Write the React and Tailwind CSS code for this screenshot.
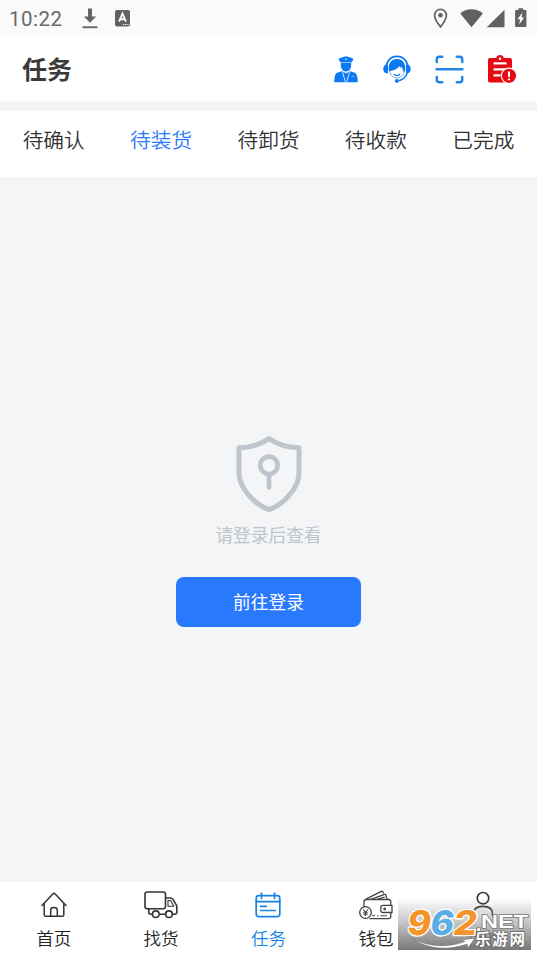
import React from "react";
import { clsx } from "clsx";

const TABS = ["待确认", "待装货", "待卸货", "待收款", "已完成"];

const DownloadIcon = () => (
  <svg width="16" height="21" viewBox="0 0 16 21" fill="#666">
    <path d="M6 0.5h4v8h4.2L8 14.8 1.8 8.500H6z" />
    <path d="M0.500 18.300h15v1.900h-15z" />
  </svg>
);

const KeyboardIcon = () => (
  <svg width="15" height="17" viewBox="0 0 15 17">
    <rect width="15" height="16.500" rx="2" fill="#626262" />
    <path d="M4 11.600 7.500 3.600l3.500 8M5.300 9.200h4.400" fill="none" stroke="#fafafa" strokeWidth="1.900" />
    <path d="M8 14.500h1.300M10.200 14.500h1.300M12.400 14.500h1.300" stroke="#fafafa" strokeWidth="1.200" />
  </svg>
);

const StatusIcons = () => (
  <svg width="96" height="22" viewBox="0 0 96 22" fill="#616161">
    <path
      d="M7.500 2.400c-3.300 0-5.900 2.600-5.900 5.900 0 4.300 5.900 11.600 5.900 11.600s5.900-7.300 5.900-11.600c0-3.300-2.600-5.900-5.900-5.900z"
      fill="none"
      stroke="#666"
      strokeWidth="1.700"
    />
    <circle cx="7.500" cy="8.300" r="2.300" />
    <path d="M27.200 6.500C33.500.9 43.500.9 49.900 6.500L38.500 20.200z" />
    <path d="M71.500 2.700v17.600H53.700z" />
    <path d="M85.400 1.200h4.800v1.700h2.200c.6 0 1 .5 1 1v15.200c0 .6-.4 1-1 1h-9.300c-.6 0-1-.4-1-1V3.900c0-.5.4-1 1-1h2.300z" />
    <path d="M89.400 5.400 84.500 12.200h2.600l-.9 5.400 5-7.100h-2.700z" fill="#fff" />
  </svg>
);

const DriverIcon = () => (
  <svg width="24" height="27" viewBox="0 0 24 27" fill="#0a79f2">
    <path d="M12 0.300c2.300.8 4.800 1.100 6.800 2.300.7.500.5 1.300-.2 2.200L17.300 6.500H6.700L5.400 4.800c-.7-.9-.9-1.700-.2-2.200C7.200 1.400 9.700 1.100 12 .3z" />
    <path d="M11 3.200h2" stroke="#fff" strokeWidth="0.900" />
    <path d="M6.800 6.900h10.400c.4 5-1.800 8.500-5.200 8.500S6.400 11.900 6.800 6.900z" />
    <path d="M8 15.300 3.200 16.700C.9 17.600.4 21.500.2 26.200h23.600c-.2-4.700-.7-8.600-3-9.500L16 15.300l-4 2z" />
    <path d="m8.500 15.900 2.800 10M15.500 15.900l-2.800 10" stroke="#fff" strokeWidth="0.800" />
    <path d="M17.500 20.500h2.600" stroke="#fff" strokeWidth="0.500" />
  </svg>
);

const ServiceIcon = () => (
  <svg width="28" height="28" viewBox="0 0 28 28" fill="none" stroke="#0a79f2">
    <path d="M3.200 10.500C4.900 4.300 9 1.400 14 1.400s9.100 2.900 10.800 9.100" strokeWidth="1.900" />
    <path
      d="M6 16.200C4.600 8.300 8.300 3.900 14 3.900s9.400 4.400 8 12.300l-1.500.6c-.7-2.300-1.300-3.800-2.300-5.200-.3.900-.7 1.400-1.400 1.900.1-1 .1-1.600-.2-2.400-2 2.600-5.300 4.300-8.400 4.700z"
      fill="#0a79f2"
      stroke="none"
    />
    <path d="M6.500 16c1.100 4.500 3.900 7 7.500 7s6.400-2.500 7.500-7" strokeWidth="0.600" />
    <path d="M10.800 19.300c1.900 1.500 4.500 1.500 6.400 0" strokeWidth="1.200" />
    <path
      d="M3.600 9.800H5v8.500H3.600C1.600 18.300.3 16.500.3 14s1.300-4.200 3.300-4.200zM24.400 9.800H23v8.500h1.400c2 0 3.300-1.800 3.300-4.300s-1.300-4.200-3.300-4.200z"
      fill="#0a79f2"
      stroke="none"
    />
    <path d="M24.300 18c-1.600 4.400-4.600 6.900-9 7.700" strokeWidth="1.400" />
    <circle cx="13.800" cy="25.900" r="1.900" fill="#0a79f2" stroke="none" />
  </svg>
);

const ScanIcon = () => (
  <svg
    width="29"
    height="29"
    viewBox="0 0 29 29"
    fill="none"
    stroke="#2186e5"
    strokeWidth="2.500"
    strokeLinecap="round"
  >
    <path d="M1.800 6.900V4.200c0-1.600.9-2.500 2.500-2.500h2.900M21.800 1.700h2.900c1.600 0 2.500.9 2.500 2.500v2.700M27.200 22.100v2.700c0 1.600-.9 2.500-2.500 2.500h-2.900M7.200 27.300H4.300c-1.600 0-2.500-.9-2.500-2.500v-2.700" />
    <path d="M1.700 14.300h25.600" />
  </svg>
);

const OrderAlertIcon = () => (
  <svg width="29" height="29" viewBox="0 0 29 29">
    <path
      d="M2 3h6.200C8.600 1 10 0 12 0s3.400 1 3.800 3H22c1.300 0 2 .7 2 2v20.500c0 1.300-.7 2-2 2H2c-1.300 0-2-.7-2-2V5c0-1.300.7-2 2-2z"
      fill="#e60a12"
    />
    <circle cx="12" cy="3.700" r="1.300" fill="#fff" />
    <path d="M5.500 8.300h13M5.500 14.300h13M5.500 20.300h7" stroke="#fff" strokeWidth="2.200" />
    <circle cx="21" cy="20.800" r="8.200" fill="#fff" />
    <circle cx="21" cy="20.800" r="7.100" fill="#e60a12" />
    <path d="M21 16.500v5.500M21 23.500v1.800" stroke="#fff" strokeWidth="2" />
  </svg>
);

const ShieldIcon = () => (
  <svg
    width="68"
    height="78"
    viewBox="0 0 68 78"
    fill="none"
    stroke="#c0c4cd"
    strokeWidth="5"
    strokeLinecap="round"
    strokeLinejoin="round"
  >
    <path d="M34 3.500C26.500 9 16.500 12.500 4 12.800V38C4 53.500 21 70.500 34 74.500 47 70.500 64 53.500 64 38V12.800C51.500 12.500 41.500 9 34 3.500z" />
    <circle cx="34" cy="30.300" r="8.700" strokeWidth="4.600" />
    <path d="M34 40v12.500" strokeWidth="4.800" />
  </svg>
);

const HomeIcon = () => (
  <svg width="26" height="26" viewBox="0 0 26 26" fill="none" stroke="#333" strokeWidth="1.500" strokeLinejoin="round" strokeLinecap="round">
    <path d="M1 13.500 11.800 2c.8-.8 1.600-.8 2.400 0L25 13.500" />
    <path d="M3.200 11.500v11.200c0 1 .6 1.600 1.600 1.600h16.400c1 0 1.600-.6 1.600-1.600V11.500" />
    <path d="M9.700 24v-5.700c0-1.700 1.100-2.700 3.300-2.700s3.300 1 3.300 2.700V24" />
  </svg>
);

const TruckIcon = () => (
  <svg width="34" height="28" viewBox="0 0 34 28" fill="none" stroke="#333" strokeWidth="1.600" strokeLinejoin="round">
    <rect x="1" y="1" width="20.500" height="16.800" rx="2.200" />
    <path d="M21.500 7h5.300c.9 0 1.500.4 2 1.200l3.400 5.600c.4.600.6 1.200.6 1.900v5.600c0 1.200-.7 1.900-1.900 1.900h-2.200M21.300 23.200H15.800M8 23.200H6.700c-1.200 0-1.900-.7-1.900-1.900v-3.500" />
    <path d="M24 9.500h2.600l3.200 5.800H24z" strokeWidth="1.100" />
    <circle cx="11.800" cy="23.200" r="3.300" />
    <circle cx="25" cy="23.200" r="3.300" />
  </svg>
);

const TaskIcon = () => (
  <svg width="26" height="26" viewBox="0 0 26 26" fill="none" stroke="#1583e9" strokeWidth="1.700" strokeLinecap="round">
    <rect x="1.200" y="3.600" width="23.600" height="21" rx="2.600" />
    <path d="M1.200 9.700h23.600" />
    <path d="M6.500 1v5.300M19.500 1v5.300" />
    <path d="M5.500 14.300h5.800M5.500 18.500h14.800" />
  </svg>
);

const WalletIcon = () => (
  <svg width="34" height="30" viewBox="0 0 34 30" fill="none" stroke="#444" strokeWidth="1.300" strokeLinejoin="round">
    <path d="M5 17V12c0-1.500 1-2.500 2.500-2.500h22c1.500 0 2.300.8 2.300 2.300v3.500M31.800 22.500v3.800c0 1.500-.8 2.300-2.300 2.300H10.500" />
    <path d="M7 9.200 22.300 1.300c.7-.3 1.200-.1 1.500.5l.8 1.600M12 9.300l13.500-5c.7-.3 1.200 0 1.400.7l1.200 4.300M18.500 9.200l7.200-2" />
    <path d="M33 15.300v7.200h-9c-1.500 0-2.200-.7-2.200-2.200v-2.800c0-1.500.7-2.200 2.200-2.200z" />
    <circle cx="25.700" cy="19" r="0.800" />
    <circle cx="6.500" cy="22.500" r="5.800" />
    <path d="m4.100 19.500 2.400 2.800 2.400-2.800M6.500 22.300v3.800M4.300 22.700h4.400M4.300 24.300h4.400" strokeWidth="1.100" />
    <path d="M13 25.800h3M18 25.800h1.500M21.500 25.800h6.500" strokeWidth="1.100" />
  </svg>
);

const MineIcon = () => (
  <svg width="26" height="28" viewBox="0 0 26 28" fill="none" stroke="#333" strokeWidth="1.600" strokeLinecap="round">
    <circle cx="13" cy="7.200" r="5.700" />
    <path d="M3.500 25v-2.200c0-4.400 3.300-7.400 9.500-7.400s9.500 3 9.500 7.400V25" />
  </svg>
);

const NAV_ITEMS = [
  { label: "首页", Icon: HomeIcon },
  { label: "找货", Icon: TruckIcon },
  { label: "任务", Icon: TaskIcon, active: true },
  { label: "钱包", Icon: WalletIcon },
  { label: "我的", Icon: MineIcon },
];

const Watermark = () => (
  <div className="absolute right-[6px] bottom-[6px] h-[52px] w-[133px] bg-linear-to-b from-[#999999]/0 via-[#8f8f8f]/55 to-[#707070]/95">
    <svg width="133" height="52" viewBox="0 0 133 52" className="block overflow-visible">
      {[
        { char: "9", x: 8, fill: "#f5942a" },
        { char: "6", x: 31, fill: "#5aaee6" },
        { char: "2", x: 54, fill: "#f5942a" },
      ].map(({ char, x, fill }) => (
        <g
          key={char}
          transform={`translate(${x} 36.500) skewX(-9)`}
          fontFamily="Inter, sans-serif"
          fontWeight="800"
          fontSize="34"
          strokeLinejoin="round"
        >
          <text textLength="23.500" lengthAdjust="spacingAndGlyphs" fill={fill} stroke="#fff" strokeWidth="2.600" paintOrder="stroke">
            {char}
          </text>
        </g>
      ))}
      <path d="M15 41c16 8 34 9 52 2.500l-3.500-1.500L77 40l-7 10-1-4C50 53 29 51 15 41z" fill="#fff" stroke="#666" strokeWidth="0.500" />
      <g
        fontFamily="'Liberation Sans', Arial, sans-serif"
        fontWeight="700"
        fontSize="19"
        fill="#fff"
        stroke="#777"
        strokeWidth="1.500"
        paintOrder="stroke"
      >
        <text x="78" y="33">.</text>
        <text x="83" y="30" textLength="47" lengthAdjust="spacingAndGlyphs">NET</text>
      </g>
      <text
        x="77"
        y="46.500"
        textLength="50"
        fontFamily="'Noto Sans CJK SC', sans-serif"
        fontWeight="700"
        fontSize="15.500"
        fill="#fff"
        stroke="#6a6a6a"
        strokeWidth="1.500"
        paintOrder="stroke"
      >
        乐游网
      </text>
    </svg>
  </div>
);

const App = () => {
  return (
    <div className="relative flex h-[956px] w-full flex-col overflow-hidden bg-[#f3f5f7] font-['Noto_Sans_CJK_SC',sans-serif]">
      <div className="flex h-9 shrink-0 items-center bg-[#fafafa] pl-[9px]">
        <span className="w-[73px] pt-0.5 font-[Roboto,sans-serif] text-[20.500px] leading-none tracking-[0.500px] text-[#696969]">
          10:22
        </span>
        <DownloadIcon />
        <div className="ml-[17px]">
          <KeyboardIcon />
        </div>
        <div className="mr-[8px] ml-auto">
          <StatusIcons />
        </div>
      </div>

      <header className="flex h-[65px] shrink-0 items-center bg-white pr-[20px] pl-[22px]">
        <h1 className="text-[25px] leading-none font-bold text-[#3a3a3a]">任务</h1>
        <div className="ml-auto flex items-center pt-px">
          <DriverIcon />
          <div className="ml-[25px]">
            <ServiceIcon />
          </div>
          <div className="ml-[24px]">
            <ScanIcon />
          </div>
          <div className="ml-[24px]">
            <OrderAlertIcon />
          </div>
        </div>
      </header>

      <div className="mt-[10px] grid h-[66px] shrink-0 grid-cols-5 bg-white pt-[13px]">
        {TABS.map((tab, idx) => (
          <button
            key={tab}
            className={clsx(
              "h-[30px] text-[20.700px] leading-[30px] font-[350]",
              idx === 1 ? "text-[#2979ff]" : "text-[#303133]"
            )}
          >
            {tab}
          </button>
        ))}
      </div>

      <main className="flex flex-1 flex-col items-center pt-[258px]">
        <ShieldIcon />
        <p className="mt-[8px] text-[17.700px] leading-[26px] text-[#c0c4cc]">请登录后查看</p>
        <button className="mt-[30px] h-[50px] w-[185px] rounded-[8px] bg-[#2979ff] pb-0.5 text-[17.700px] text-white">
          前往登录
        </button>
      </main>

      <nav className="grid h-[74px] shrink-0 grid-cols-5 bg-white">
        {NAV_ITEMS.map(({ label, Icon, active }) => (
          <div
            key={label}
            className={clsx(
              "flex flex-col items-center text-[17.500px] leading-[26px] font-[350]",
              active ? "text-[#1583e9]" : "text-[#222]"
            )}
          >
            <div className="flex h-[43px] items-center pt-0.5">
              <Icon />
            </div>
            <span>{label}</span>
          </div>
        ))}
      </nav>

      <Watermark />
    </div>
  );
};

export default App;
